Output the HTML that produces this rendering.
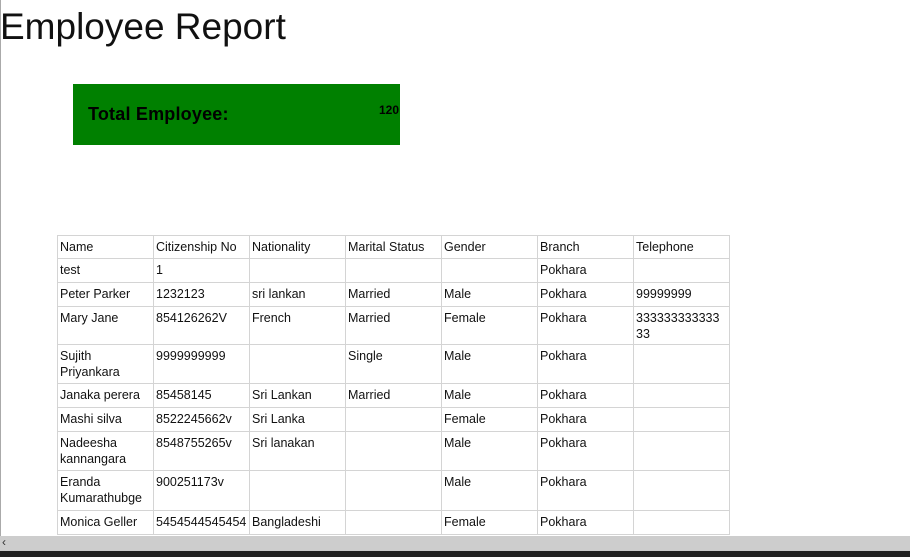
<!DOCTYPE html>
<html><head><meta charset="utf-8"><style>
body{margin:0;width:910px;height:557px;overflow:hidden;background:#fff;position:relative;font-family:"Liberation Sans",sans-serif;}
#lb{position:absolute;left:0;top:0;width:1px;height:536px;background:#aaa}
h1{position:absolute;left:0;top:4px;margin:0;font-weight:normal;font-size:37px;letter-spacing:0;color:#111;line-height:46px}
#box{position:absolute;left:73px;top:84px;width:327px;height:61px;background:#008000}
#box .t{position:absolute;left:15px;top:20px;font-weight:bold;font-size:18px;letter-spacing:0.2px;color:#000}
#box .n{position:absolute;right:1px;top:19px;font-weight:bold;font-size:12px;color:#000}
.c{position:absolute;box-sizing:border-box;border:1px solid #d4d4d4;font-size:12.5px;line-height:16px;padding:3px 2px 2px;color:#111;overflow:hidden;word-break:break-all}
#sb{position:absolute;left:0;top:536px;width:910px;height:15px;background:#cdcdcd}
#sb span{position:absolute;left:2px;top:-1px;font-size:12px;color:#333}
#bot{position:absolute;left:0;top:551px;width:910px;height:6px;background:#222}
</style></head><body>
<div id="lb"></div>
<h1>Employee Report</h1>
<div id="box"><div class="t">Total Employee:</div><div class="n">120</div></div>
<div id="tbl"></div>
<script>
var X=[57,153,249,345,441,537,633,729];
var Y=[235,258,282,306,344,383,407,431,470,510,534];
var R=[["Name","Citizenship No","Nationality","Marital Status","Gender","Branch","Telephone"],
["test","1","","","","Pokhara",""],
["Peter Parker","1232123","sri lankan","Married","Male","Pokhara","99999999"],
["Mary Jane","854126262V","French","Married","Female","Pokhara","333333333333<br>33"],
["Sujith<br>Priyankara","9999999999","","Single","Male","Pokhara",""],
["Janaka perera","85458145","Sri Lankan","Married","Male","Pokhara",""],
["Mashi silva","8522245662v","Sri Lanka","","Female","Pokhara",""],
["Nadeesha<br>kannangara","8548755265v","Sri lanakan","","Male","Pokhara",""],
["Eranda<br>Kumarathubge","900251173v","","","Male","Pokhara",""],
["Monica Geller","5454544545454","Bangladeshi","","Female","Pokhara",""]];
var h="";
for(var r=0;r<R.length;r++)for(var c=0;c<7;c++){
h+='<div class="c" style="left:'+X[c]+'px;top:'+Y[r]+'px;width:'+(X[c+1]-X[c]+1)+'px;height:'+(Y[r+1]-Y[r]+1)+'px">'+R[r][c]+'</div>';}
document.getElementById("tbl").innerHTML=h;
</script>
<div id="sb"><span>&lsaquo;</span></div>
<div id="bot"></div>
</body></html>
